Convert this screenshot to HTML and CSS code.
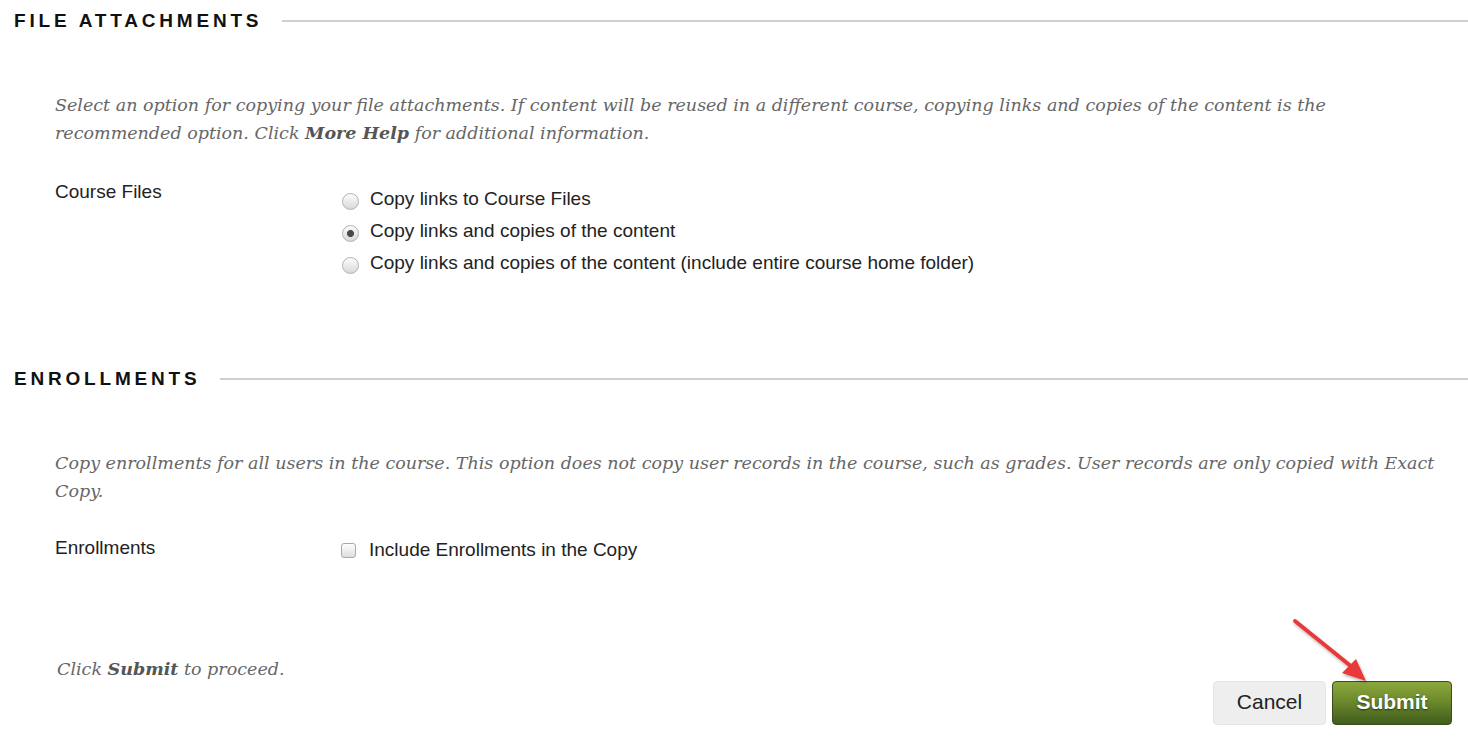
FILE: index.html
```html
<!DOCTYPE html>
<html lang="en">
<head>
<meta charset="utf-8">
<title>Course Copy</title>
<link rel="stylesheet" href="styles.css">
</head>
<body>
<section class="section">
  <div class="section-head">
    <h2 class="section-title">FILE ATTACHMENTS</h2>
    <div class="rule"></div>
  </div>
  <p class="desc">Select an option for copying your file attachments. If content will be reused in a different course, copying links and copies of the content is the<br>recommended option. Click <b>More Help</b> for additional information.</p>
  <div class="field field-radio">
    <div class="field-label">Course Files</div>
    <div class="options">
      <label class="option"><input type="radio" name="files" class="radio"><span>Copy links to Course Files</span></label>
      <label class="option"><input type="radio" name="files" class="radio" checked><span>Copy links and copies of the content</span></label>
      <label class="option"><input type="radio" name="files" class="radio"><span>Copy links and copies of the content (include entire course home folder)</span></label>
    </div>
  </div>
</section>
<section class="section section-enroll">
  <div class="section-head">
    <h2 class="section-title">ENROLLMENTS</h2>
    <div class="rule"></div>
  </div>
  <p class="desc">Copy enrollments for all users in the course. This option does not copy user records in the course, such as grades. User records are only copied with Exact<br>Copy.</p>
  <div class="field field-check">
    <div class="field-label">Enrollments</div>
    <div class="options">
      <label class="option option-check"><input type="checkbox" class="check"><span>Include Enrollments in the Copy</span></label>
    </div>
  </div>
</section>
<div class="footer">
  <p class="proceed">Click <b>Submit</b> to proceed.</p>
  <div class="buttons">
    <button class="btn btn-cancel" type="button">Cancel</button>
    <button class="btn btn-submit" type="button">Submit</button>
  </div>
  <svg class="arrow" width="100" height="80" viewBox="0 0 100 80">
    <defs>
      <filter id="sh" x="-20%" y="-20%" width="140%" height="140%">
        <feDropShadow dx="1" dy="2" stdDeviation="1.5" flood-color="#000" flood-opacity="0.3"/>
      </filter>
    </defs>
    <g filter="url(#sh)">
      <line x1="5" y1="6" x2="62" y2="52" stroke="#e8393a" stroke-width="4" stroke-linecap="round"/>
      <polygon points="76,66 52,58 66,44" fill="#e8393a"/>
    </g>
  </svg>
</div>
</body>
</html>
```
FILE: styles.css
```css
html, body {
  margin: 0;
  padding: 0;
  background: #fff;
}
body {
  font-family: "Liberation Sans", Arial, sans-serif;
  color: #222;
  width: 1468px;
}
.section-head {
  display: flex;
  align-items: center;
  gap: 20px;
  height: 42px;
  padding-left: 14px;
}
.section-title {
  margin: 0;
  font-size: 19px;
  font-weight: bold;
  letter-spacing: 3.8px;
  color: #111;
  white-space: nowrap;
}
.rule {
  flex: 1;
  height: 2px;
  background: #cfcfcf;
}
.desc {
  margin: 49px 0 0 55px;
  font-family: "DejaVu Serif", Georgia, serif;
  font-style: italic;
  font-size: 17.5px;
  line-height: 28px;
  color: #666;
  white-space: nowrap;
}
.desc b, .proceed b {
  color: #555;
}
.field {
  display: grid;
  grid-template-columns: 286px 1fr;
  margin-left: 55px;
}
.field-radio {
  margin-top: 36px;
}
.field-check {
  margin-top: 33px;
}
.field-label {
  font-size: 19px;
  line-height: 18px;
  color: #222;
}
.field-check .field-label {
  padding-top: 1px;
}
.options {
  display: flex;
  flex-direction: column;
}
.option {
  display: flex;
  align-items: center;
  gap: 11px;
  height: 32px;
  font-size: 19px;
  color: #222;
}
.option-check {
  height: 24px;
  gap: 13px;
}
.radio {
  appearance: none;
  -webkit-appearance: none;
  margin: 0 0 0 1px;
  width: 17px;
  height: 17px;
  border-radius: 50%;
  border: 1px solid #b0b0b0;
  background: linear-gradient(#fdfdfd, #d8d8d8);
  box-sizing: border-box;
  position: relative;
  top: 2px;
}
.radio:checked {
  background: radial-gradient(circle, #444 0, #505050 3.2px, transparent 3.9px), linear-gradient(#fdfdfd, #d8d8d8);
}
.check {
  appearance: none;
  -webkit-appearance: none;
  margin: 0;
  width: 15px;
  height: 15px;
  border-radius: 3px;
  border: 1px solid #aaa;
  background: linear-gradient(#fdfdfd, #dedede);
  box-sizing: border-box;
}
.section-enroll {
  margin-top: 79px;
}
.footer {
  position: relative;
  display: flex;
  justify-content: space-between;
  align-items: flex-start;
  margin-top: 93px;
  padding: 0 16px 0 57px;
}
.proceed {
  margin: 0;
  font-family: "DejaVu Serif", Georgia, serif;
  font-style: italic;
  font-size: 17.5px;
  line-height: 28px;
  color: #666;
}
.buttons {
  display: flex;
  gap: 6px;
  margin-top: 26px;
}
.btn {
  height: 44px;
  border-radius: 4px;
  font-family: "Liberation Sans", Arial, sans-serif;
  font-size: 21px;
  padding: 0 0 2px;
  cursor: pointer;
}
.btn-cancel {
  width: 113px;
  background: #eeeeee;
  border: 1px solid #e6e6e6;
  color: #222;
}
.btn-submit {
  width: 120px;
  background: linear-gradient(#8ba83c, #6d8a2c 45%, #405d1d);
  border: 1px solid #3b4d1c;
  color: #fff;
  font-weight: bold;
  text-shadow: 0 1px 2px rgba(0,0,0,0.6);
}
.arrow {
  position: absolute;
  left: 1290px;
  top: -40px;
}
```
